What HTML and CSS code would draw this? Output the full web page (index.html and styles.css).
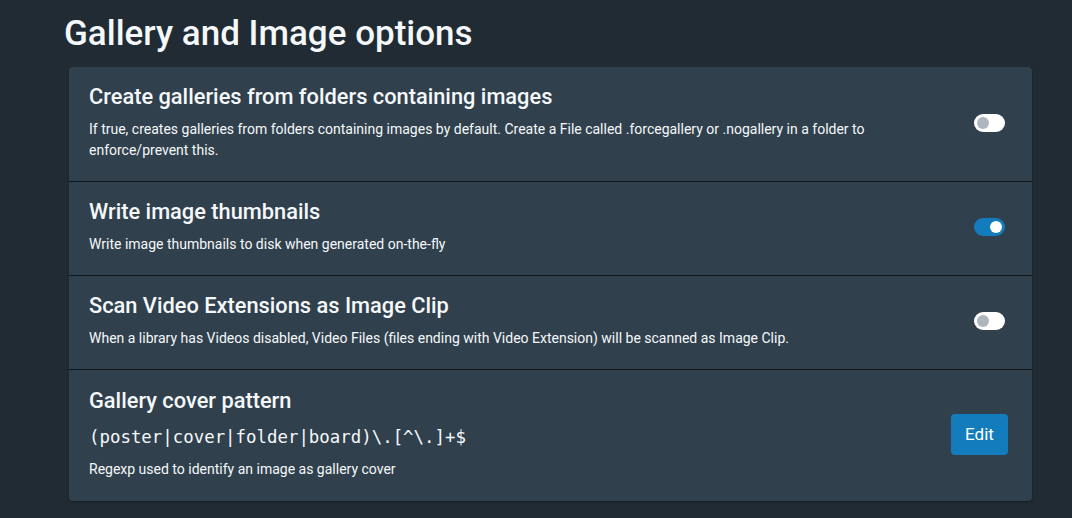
FILE: index.html
```html
<!DOCTYPE html>
<html lang="en">
<head>
<meta charset="utf-8">
<title>Gallery and Image options</title>
<link rel="stylesheet" href="styles.css">
</head>
<body>
<main class="page">
  <h1 class="section-title">Gallery and Image options</h1>
  <div class="card">
    <div class="setting">
      <div class="setting-text">
        <h3 class="setting-title">Create galleries from folders containing images</h3>
        <div class="setting-desc">If true, creates galleries from folders containing images by default. Create a File called .forcegallery or .nogallery in a folder to enforce/prevent this.</div>
      </div>
      <span class="switch"><span class="knob"></span></span>
    </div>
    <div class="setting">
      <div class="setting-text">
        <h3 class="setting-title">Write image thumbnails</h3>
        <div class="setting-desc">Write image thumbnails to disk when generated on-the-fly</div>
      </div>
      <span class="switch on"><span class="knob"></span></span>
    </div>
    <div class="setting">
      <div class="setting-text">
        <h3 class="setting-title">Scan Video Extensions as Image Clip</h3>
        <div class="setting-desc">When a library has Videos disabled, Video Files (files ending with Video Extension) will be scanned as Image Clip.</div>
      </div>
      <span class="switch"><span class="knob"></span></span>
    </div>
    <div class="setting setting-pattern">
      <div class="setting-text">
        <h3 class="setting-title">Gallery cover pattern</h3>
        <div class="setting-value">(poster|cover|folder|board)\.[^\.]+$</div>
        <div class="setting-desc">Regexp used to identify an image as gallery cover</div>
      </div>
      <button class="btn-edit" type="button">Edit</button>
    </div>
  </div>
</main>
</body>
</html>
```

FILE: styles.css
```css
html, body {
  margin: 0;
  padding: 0;
}
body {
  background: #202b33;
  color: #f5f8fa;
  font-family: Roboto, "Noto Sans", sans-serif;
  height: 518px;
  overflow: hidden;
}
.page {
  padding: 13px 40px 0 64px;
}
.section-title {
  margin: 0 0 12px 0;
  font-size: 35px;
  font-weight: 500;
  line-height: 42px;
  color: #f5f8fa;
}
.card {
  margin-left: 5px;
  background: #30404d;
  border-radius: 4px;
  box-shadow: 0 1px 2px rgba(0, 0, 0, 0.35);
}
.setting {
  display: flex;
  align-items: center;
  padding: 17px 24px 20px 20px;
}
.setting + .setting {
  border-top: 1px solid #10161a;
}
.setting-pattern {
  padding-top: 18px;
  padding-bottom: 21px;
}
.setting-text {
  flex: 1;
  min-width: 0;
  padding-right: 104px;
}
.setting-title {
  margin: 0 0 9px 0;
  font-size: 21.8px;
  font-weight: 500;
  line-height: 26px;
}
.setting-desc {
  font-size: 14px;
  line-height: 21px;
}
.setting-value {
  font-family: "DejaVu Sans Mono", monospace;
  font-size: 17.4px;
  line-height: 20px;
  margin: 13px 0 12px 0;
}
.switch {
  flex: none;
  width: 31px;
  height: 18px;
  border-radius: 9px;
  background: #ffffff;
  margin-right: 3px;
  display: flex;
  align-items: center;
  padding: 0 3px;
  box-sizing: border-box;
}
.switch .knob {
  width: 12px;
  height: 12px;
  border-radius: 50%;
  background: #adb5bd;
}
.switch.on {
  background: #137cbd;
  justify-content: flex-end;
}
.switch.on .knob {
  background: #ffffff;
}
.btn-edit {
  flex: none;
  background: #137cbd;
  color: #ffffff;
  border: none;
  border-radius: 4px;
  font-family: Roboto, "Noto Sans", sans-serif;
  font-size: 17px;
  line-height: 41px;
  height: 41px;
  padding: 0 14px;
  width: 57px;
}
```
